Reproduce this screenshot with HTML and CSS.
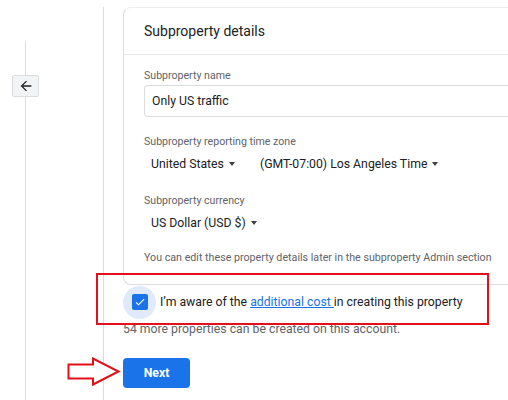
FILE: index.html
```html
<!DOCTYPE html>
<html>
<head>
  <meta charset="UTF-8">
  <title>Subproperty details</title>
  <link rel="stylesheet" href="styles.css">
</head>
<body>
  <div class="page">
    <!-- left rail with back button -->
    <div class="nav">
      <div class="track">
        <button class="back-btn" title="Back">
          <svg width="16" height="16" viewBox="0 0 24 24"><path d="M20 11H7.83l5.59-5.59L12 4l-8 8 8 8 1.41-1.41L7.83 13H20v-2z" fill="#202124"/></svg>
        </button>
      </div>
    </div>

    <div class="main">
      <!-- card -->
      <div class="card">
        <div class="card-head">Subproperty details</div>
        <div class="card-body">
          <div class="field-label">Subproperty name</div>
          <div class="text-input">Only US traffic</div>

          <div class="field-label spaced">Subproperty reporting time zone</div>
          <div class="select-row">
            <span class="select country">United States <i class="caret"></i></span>
            <span class="select">(GMT-07:00) Los Angeles Time <i class="caret"></i></span>
          </div>

          <div class="field-label spaced">Subproperty currency</div>
          <div class="select-row">
            <span class="select">US Dollar (USD $) <i class="caret"></i></span>
          </div>

          <div class="note">You can edit these property details later in the subproperty Admin section</div>
        </div>
      </div>

      <div class="check-row">
        <span class="check-ripple"><span class="checkbox">
          <svg width="12" height="12" viewBox="0 0 24 24"><path d="M9 16.2L4.8 12l-1.4 1.4L9 19 21 7l-1.4-1.4L9 16.2z" fill="#fff"/></svg>
        </span></span>
        <span class="check-text">I’m aware of the <a href="#">additional cost </a>in creating this property</span>
      </div>
      <div class="remaining">54 more properties can be created on this account.</div>

      <button class="next-btn">Next</button>
    </div>
  </div>

  <!-- annotations -->
  <div class="mark-box"></div>
  <svg class="mark-arrow" width="54" height="30" viewBox="0 0 54 30">
    <path d="M1.5 7.5H26V1.5L51.5 14.5 26 27.5V21.5H1.5z" fill="#fff" stroke="#e3101b" stroke-width="2"/>
  </svg>
</body>
</html>
```

FILE: styles.css
```css
html,body{overflow:hidden;}
body{margin:0;background:#fff;font-family:Roboto,"Liberation Sans",Arial,sans-serif;color:#202124;}
.page{display:flex;width:508px;height:400px;overflow:hidden;}

/* --- left rail --- */
.nav{width:103px;flex:none;padding-top:41px;display:flex;box-sizing:border-box;}
.track{margin-left:25px;border-left:1px solid #dadce0;padding-top:34px;}
.back-btn{display:flex;align-items:center;justify-content:center;width:27px;height:22px;margin-left:-14px;padding:0;
  background:#f1f3f4;border:1px solid #dadce0;border-radius:2px;cursor:pointer;}

/* --- main column --- */
.main{flex:1;margin-top:7px;border-left:1px solid #dadce0;padding-left:19px;min-width:0;overflow:hidden;}
.card{width:600px;border:1px solid #dadce0;border-top-color:#eceef0;border-right:none;border-radius:8px 0 0 8px;}
.card-head{height:46px;display:flex;align-items:center;padding:0 20px;font-size:14px;border-bottom:1px solid #e8eaed;}
.card-body{padding:13px 20px 18px;}
.field-label{font-size:10.6px;line-height:16px;color:#5f6368;}
.field-label.spaced{margin-top:17px;}
.text-input{height:30px;margin-top:1px;border:1px solid #dadce0;border-right:none;border-radius:4px 0 0 4px;padding-left:7px;
  display:flex;align-items:center;font-size:12.25px;}
.select-row{display:flex;height:24px;margin-top:2px;align-items:center;font-size:12.25px;}
.select{padding-left:7px;display:inline-flex;align-items:center;}
.select.country{width:102px;}
.caret{display:inline-block;width:0;height:0;margin-left:5px;border-left:3.5px solid transparent;border-right:3.5px solid transparent;border-top:4px solid #3c4043;}
.note{margin-top:15px;font-size:10.7px;line-height:16px;color:#5f6368;}

/* --- checkbox --- */
.check-row{display:flex;align-items:center;height:32px;margin-top:1px;font-size:12.25px;}
.check-ripple{width:33px;height:33px;border-radius:50%;background:#e1eafb;display:flex;align-items:center;justify-content:center;}
.checkbox{width:16px;height:16px;border-radius:2px;background:#1a73e8;display:flex;align-items:center;justify-content:center;}
.check-text{margin-left:4px;}
.check-text a{color:#1a73e8;}
.remaining{margin-top:1px;font-size:12.25px;line-height:20px;color:#5f6368;}

.next-btn{margin-top:19px;width:67px;height:30px;border:none;border-radius:4px;background:#1a73e8;color:#fff;
  font-family:inherit;font-size:12.25px;font-weight:bold;cursor:pointer;}

/* --- red annotations --- */
.mark-box{position:absolute;left:96px;top:273px;width:389px;height:48px;border:2px solid #e3101b;}
.mark-arrow{position:absolute;left:67px;top:357px;}
```
